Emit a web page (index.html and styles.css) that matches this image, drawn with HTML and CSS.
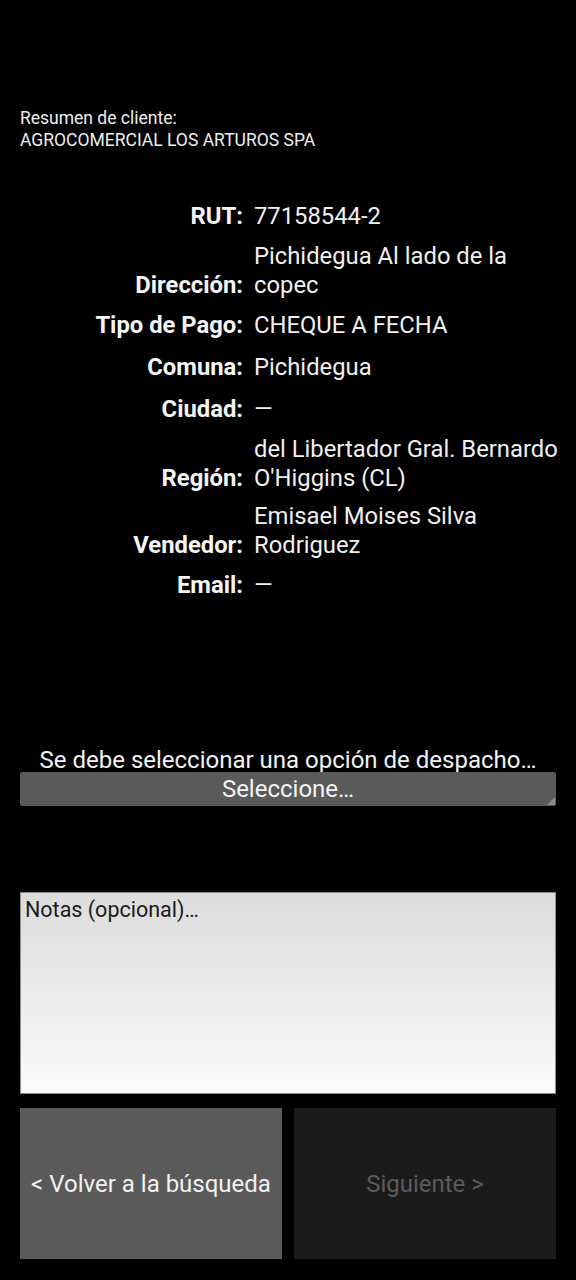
FILE: index.html
```html
<!DOCTYPE html>
<html lang="es">
<head>
<meta charset="utf-8">
<title>Resumen de cliente</title>
<link rel="stylesheet" href="styles.css">
</head>
<body>
<main class="screen">
  <header class="summary">
    <div>Resumen de cliente:</div>
    <div>AGROCOMERCIAL LOS ARTUROS SPA</div>
  </header>

  <section class="info">
    <div class="row"><span class="label">RUT:</span><span class="value">77158544-2</span></div>
    <div class="row"><span class="label">Dirección:</span><span class="value">Pichidegua Al lado de la copec</span></div>
    <div class="row"><span class="label">Tipo de Pago:</span><span class="value">CHEQUE A FECHA</span></div>
    <div class="row"><span class="label">Comuna:</span><span class="value">Pichidegua</span></div>
    <div class="row"><span class="label">Ciudad:</span><span class="value">—</span></div>
    <div class="row"><span class="label">Región:</span><span class="value">del Libertador Gral. Bernardo O'Higgins (CL)</span></div>
    <div class="row"><span class="label">Vendedor:</span><span class="value">Emisael Moises Silva Rodriguez</span></div>
    <div class="row"><span class="label">Email:</span><span class="value">—</span></div>
  </section>

  <section class="dispatch">
    <div class="dispatch-msg">Se debe seleccionar una opción de despacho…</div>
    <div class="spinner">Seleccione…<span class="spinner-corner"></span></div>
  </section>

  <div class="notes">Notas (opcional)…</div>

  <nav class="actions">
    <div class="btn btn-back">&lt; Volver a la búsqueda</div>
    <div class="btn btn-next">Siguiente &gt;</div>
  </nav>
</main>
</body>
</html>
```

FILE: styles.css
```css
html, body {
  margin: 0;
  padding: 0;
  background: #000;
}

.screen {
  font-family: Roboto, "Liberation Sans", sans-serif;
  color: #f2f2f2;
  padding: 107px 20px 0;
  box-sizing: border-box;
  width: 576px;
  min-height: 1280px;
}

.summary {
  font-size: 17.5px;
  line-height: 22px;
  color: #eeeeee;
}

.info {
  margin-top: 44px;
  font-size: 23.8px;
  line-height: 29px;
}

.row {
  display: grid;
  grid-template-columns: 223px 1fr;
  column-gap: 11px;
  align-items: last baseline;
  margin-right: -8px;
}

.label {
  font-weight: 700;
  text-align: right;
  padding: 6.5px 0 4.5px;
  color: #f5f5f5;
}

.value {
  box-sizing: border-box;
  min-height: 40px;
  padding: 4.5px 0;
  color: #f0f0f0;
}

.dispatch {
  margin-top: 142px;
}

.dispatch-msg {
  text-align: center;
  font-size: 24px;
  line-height: 24px;
  color: #f2f2f2;
}

.spinner {
  position: relative;
  height: 34px;
  line-height: 34px;
  background: #5a5a5a;
  border-radius: 2px;
  text-align: center;
  font-size: 24px;
  color: #f4f4f4;
}

.spinner-corner {
  position: absolute;
  right: 1px;
  bottom: 1px;
  width: 0;
  height: 0;
  border-left: 8px solid transparent;
  border-bottom: 8px solid #8a8a8a;
}

.notes {
  margin-top: 86px;
  height: 202px;
  box-sizing: border-box;
  border: 1px solid #8c8c8c;
  background: linear-gradient(#dcdcdc, #fbfbfb);
  color: #1a1a1a;
  font-size: 21.5px;
  line-height: 28px;
  padding: 3px 4px;
}

.actions {
  margin-top: 14px;
  display: grid;
  grid-template-columns: 1fr 1fr;
  column-gap: 12px;
}

.btn {
  height: 151px;
  display: flex;
  align-items: center;
  justify-content: center;
  font-size: 24px;
}

.btn-back {
  background: #5a5a5a;
  color: #f2f2f2;
}

.btn-next {
  background: #1b1b1b;
  color: #5c5c5c;
}
```
